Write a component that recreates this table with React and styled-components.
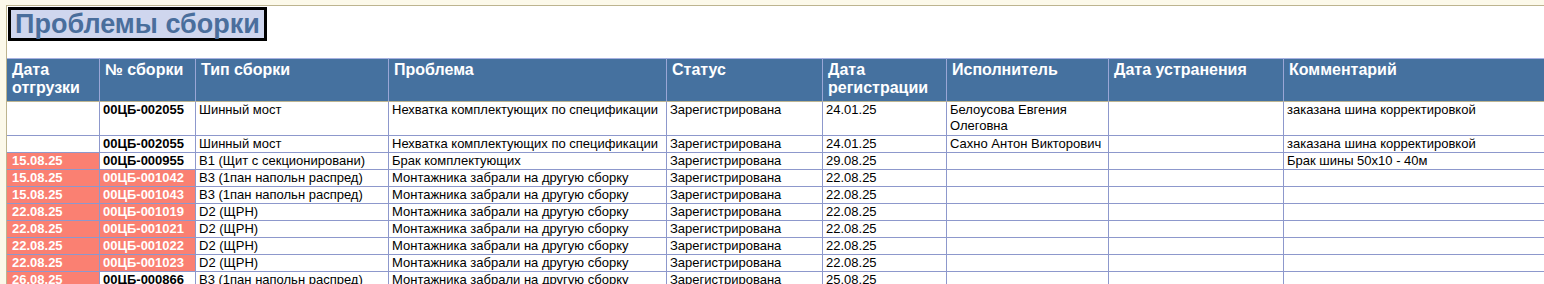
import React from "react";
import styled, { createGlobalStyle } from "styled-components";

const GlobalStyle = createGlobalStyle`
  html, body { margin: 0; padding: 0; }
  body {
    background: #fcf9ea;
    font-family: "Liberation Sans", Arial, sans-serif;
    overflow: hidden;
  }
`;

const Page = styled.div`
  padding: 5px 0 0 6px;
  min-height: 284px;
  box-sizing: border-box;
  display: flex;
`;

const Sheet = styled.div`
  flex: 1;
  background: #ffffff;
  border-top: 1px solid #bdb48f;
  border-left: 1px solid #bdb48f;
  padding-top: 1px;
  min-height: 278px;
  overflow: hidden;
`;

const Title = styled.h1`
  display: inline-block;
  margin: 0 0 17px 1px;
  padding: 0 4px 0 4px;
  border: 3px solid #000;
  background: #cfd6ee;
  color: #4a6e9c;
  font-family: "Liberation Sans", Arial, sans-serif;
  font-size: 27px;
  font-weight: bold;
  line-height: 28px;
  height: 28px;
`;

const Grid = styled.div`
  display: grid;
  grid-template-columns: 93px 96px 193px 278px 156px 124px 162px 175px 320px;
  width: max-content;
`;

const HeadCell = styled.div`
  box-sizing: border-box;
  height: 44px;
  background: #45719f;
  border-top: 1px solid #a6b1e0;
  border-bottom: 1px solid #bdb591;
  border-right: 1px solid #9aa6d6;
  color: #fff;
  font-weight: bold;
  font-size: 16px;
  line-height: 18px;
  padding: 2px 2px 0 5px;
`;

const Cell = styled.div`
  box-sizing: border-box;
  height: ${(p) => (p.$tall ? 34 : 17)}px;
  border-right: 1px solid #8d98cc;
  border-bottom: 1px solid #8d98cc;
  background: ${(p) => (p.$hot ? "#fa8072" : "#fff")};
  color: ${(p) => (p.$hot ? "#fff" : "#000")};
  font-weight: ${(p) => (p.$bold ? "bold" : "normal")};
  font-size: 13px;
  line-height: 16px;
  padding: 0 2px 0 ${(p) => (p.$first ? 5 : 3)}px;
  white-space: ${(p) => (p.$wrap ? "normal" : "nowrap")};
  overflow: hidden;
`;

const headers = [
  "Дата отгрузки",
  "№ сборки",
  "Тип сборки",
  "Проблема",
  "Статус",
  "Дата регистрации",
  "Исполнитель",
  "Дата устранения",
  "Комментарий",
];

const M = "Монтажника забрали на другую сборку";
const Z = "Зарегистрирована";
const B3 = "B3 (1пан напольн распред)";

const rows = [
  { tall: true, date: "", no: "00ЦБ-002055", noHot: false, type: "Шинный мост", problem: "Нехватка комплектующих по спецификации", status: Z, reg: "24.01.25", who: "Белоусова Евгения Олеговна", fixed: "", comment: "заказана шина корректировкой" },
  { date: "", no: "00ЦБ-002055", noHot: false, type: "Шинный мост", problem: "Нехватка комплектующих по спецификации", status: Z, reg: "24.01.25", who: "Сахно Антон Викторович", fixed: "", comment: "заказана шина корректировкой" },
  { date: "15.08.25", no: "00ЦБ-000955", noHot: false, type: "B1 (Щит с секционировани)", problem: "Брак комплектующих", status: Z, reg: "29.08.25", who: "", fixed: "", comment: "Брак шины 50х10 - 40м" },
  { date: "15.08.25", no: "00ЦБ-001042", noHot: true, type: B3, problem: M, status: Z, reg: "22.08.25", who: "", fixed: "", comment: "" },
  { date: "15.08.25", no: "00ЦБ-001043", noHot: true, type: B3, problem: M, status: Z, reg: "22.08.25", who: "", fixed: "", comment: "" },
  { date: "22.08.25", no: "00ЦБ-001019", noHot: true, type: "D2 (ЩРН)", problem: M, status: Z, reg: "22.08.25", who: "", fixed: "", comment: "" },
  { date: "22.08.25", no: "00ЦБ-001021", noHot: true, type: "D2 (ЩРН)", problem: M, status: Z, reg: "22.08.25", who: "", fixed: "", comment: "" },
  { date: "22.08.25", no: "00ЦБ-001022", noHot: true, type: "D2 (ЩРН)", problem: M, status: Z, reg: "22.08.25", who: "", fixed: "", comment: "" },
  { date: "22.08.25", no: "00ЦБ-001023", noHot: true, type: "D2 (ЩРН)", problem: M, status: Z, reg: "22.08.25", who: "", fixed: "", comment: "" },
  { date: "26.08.25", no: "00ЦБ-000866", noHot: false, type: B3, problem: M, status: Z, reg: "25.08.25", who: "", fixed: "", comment: "" },
];

export default function App() {
  return (
    <>
      <GlobalStyle />
      <Page>
        <Sheet>
          <Title>Проблемы сборки</Title>
          <Grid>
            {headers.map((h) => (
              <HeadCell key={h}>{h}</HeadCell>
            ))}
            {rows.map((r, i) => (
              <React.Fragment key={i}>
                <Cell $tall={r.tall} $first $bold $hot={!!r.date}>
                  {r.date}
                </Cell>
                <Cell $tall={r.tall} $bold $hot={r.noHot}>
                  {r.no}
                </Cell>
                <Cell $tall={r.tall}>{r.type}</Cell>
                <Cell $tall={r.tall}>{r.problem}</Cell>
                <Cell $tall={r.tall}>{r.status}</Cell>
                <Cell $tall={r.tall}>{r.reg}</Cell>
                <Cell $tall={r.tall} $wrap>
                  {r.who}
                </Cell>
                <Cell $tall={r.tall}>{r.fixed}</Cell>
                <Cell $tall={r.tall}>{r.comment}</Cell>
              </React.Fragment>
            ))}
          </Grid>
        </Sheet>
      </Page>
    </>
  );
}
